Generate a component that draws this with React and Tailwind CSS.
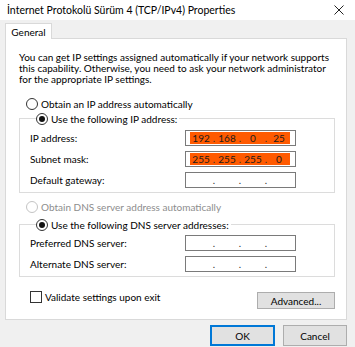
import React from 'react';

function Radio({ checked, disabled }) {
  return (
    <span
      className={`relative inline-flex items-center justify-center w-[12px] h-[12px] rounded-full border bg-white shrink-0 ${
        disabled ? 'border-[#c4c4c4]' : 'border-[#333]'
      }`}
    >
      {checked && <span className="w-[6px] h-[6px] rounded-full bg-[#111]" />}
    </span>
  );
}

function IpBox({ value }) {
  const parts = value ? value.split('.') : ['', '', '', ''];
  return (
    <div className="w-[111px] h-[16px] border border-[#7a7a7a] bg-white flex items-center pl-[4px]">
      <div className={`flex items-center h-[12px] w-[100px] ${value ? 'bg-[#ff5a00]' : ''}`}>
        {parts.map((p, i) => (
          <React.Fragment key={i}>
            <span className="w-[22.5px] text-center leading-[12px] text-[#1a1a1a]">{p}</span>
            {i < 3 && <span className="w-[4px] text-center leading-[12px] text-[#333]">.</span>}
          </React.Fragment>
        ))}
      </div>
    </div>
  );
}

function Field({ label, value }) {
  return (
    <div className="flex items-center h-[16px]">
      <span className="w-[155px] leading-[12px]">{label}</span>
      <IpBox value={value} />
    </div>
  );
}

export default function App() {
  return (
    <div className="w-[355px] h-[347px] overflow-hidden bg-[#f0f0f0] text-[10px] text-black font-['Lato',sans-serif]">
      <div className="h-[20px] bg-white flex items-center justify-between pl-[7px] pr-[11px]">
        <span className="text-[10.5px] leading-[12px]">İnternet Protokolü Sürüm 4 (TCP/IPv4) Properties</span>
        <svg width="10" height="10" viewBox="0 0 10 10" className="text-[#222]">
          <path d="M0.5 0.5 L9.5 9.5 M9.5 0.5 L0.5 9.5" stroke="currentColor" strokeWidth="1" />
        </svg>
      </div>

      <div className="pl-[5px] pr-[8px] pt-[3px]">
        <div className="flex">
          <div className="relative z-10 -mb-px h-[16px] w-[47px] bg-white border border-b-0 border-[#d9d9d9] flex items-center justify-center leading-[12px]">
            General
          </div>
        </div>

        <div className="h-[282px] bg-white border border-[#d9d9d9] pl-[13px] pr-[11px] pt-[13px]">
          <p className="leading-[11px] whitespace-nowrap">
            You can get IP settings assigned automatically if your network supports<br />
            this capability. Otherwise, you need to ask your network administrator<br />
            for the appropriate IP settings.
          </p>

          <div className="mt-[12px] ml-[7px] h-[13px] flex items-center gap-[3px]">
            <Radio />
            <span className="leading-[12px]">Obtain an IP address automatically</span>
          </div>

          <fieldset className="mt-[2px] border border-[#dcdcdc] pl-[10px] pt-[5px] pb-[4px] flex flex-col gap-[5px]">
            <legend className="ml-[6px] h-[13px] flex items-center gap-[3px] pr-[2px]">
              <Radio checked />
              <span className="leading-[12px]">Use the following IP address:</span>
            </legend>
            <Field label="IP address:" value="192 . 168 . 0 . 25" />
            <Field label="Subnet mask:" value="255 . 255 . 255 . 0" />
            <Field label="Default gateway:" />
          </fieldset>

          <div className="mt-[7px] ml-[7px] h-[13px] flex items-center gap-[3px] text-[#8d8d8d]">
            <Radio disabled />
            <span className="leading-[12px]">Obtain DNS server address automatically</span>
          </div>

          <fieldset className="mt-[5px] border border-[#dcdcdc] pl-[10px] pt-[4px] pb-[4px] flex flex-col gap-[5px]">
            <legend className="ml-[6px] h-[13px] flex items-center gap-[3px] pr-[2px]">
              <Radio checked />
              <span className="leading-[12px]">Use the following DNS server addresses:</span>
            </legend>
            <Field label="Preferred DNS server:" />
            <Field label="Alternate DNS server:" />
          </fieldset>

          <div className="mt-[14px] pl-[11px] flex justify-between items-start">
            <div className="flex items-center gap-[3px] h-[12px]">
              <span className="w-[12px] h-[12px] border border-[#333] bg-white" />
              <span className="leading-[12px]">Validate settings upon exit</span>
            </div>
            <button className="mt-[1px] w-[78px] h-[17px] bg-[#e1e1e1] border border-[#adadad] leading-[12px]">
              Advanced...
            </button>
          </div>
        </div>

        <div className="mt-[5px] flex justify-end gap-[8px]">
          <button className="w-[65px] h-[21px] bg-[#e1e1e1] border-2 border-[#0078d7] leading-[12px]">OK</button>
          <button className="w-[64px] h-[21px] bg-[#e1e1e1] border border-[#adadad] leading-[12px]">Cancel</button>
        </div>
      </div>
    </div>
  );
}
